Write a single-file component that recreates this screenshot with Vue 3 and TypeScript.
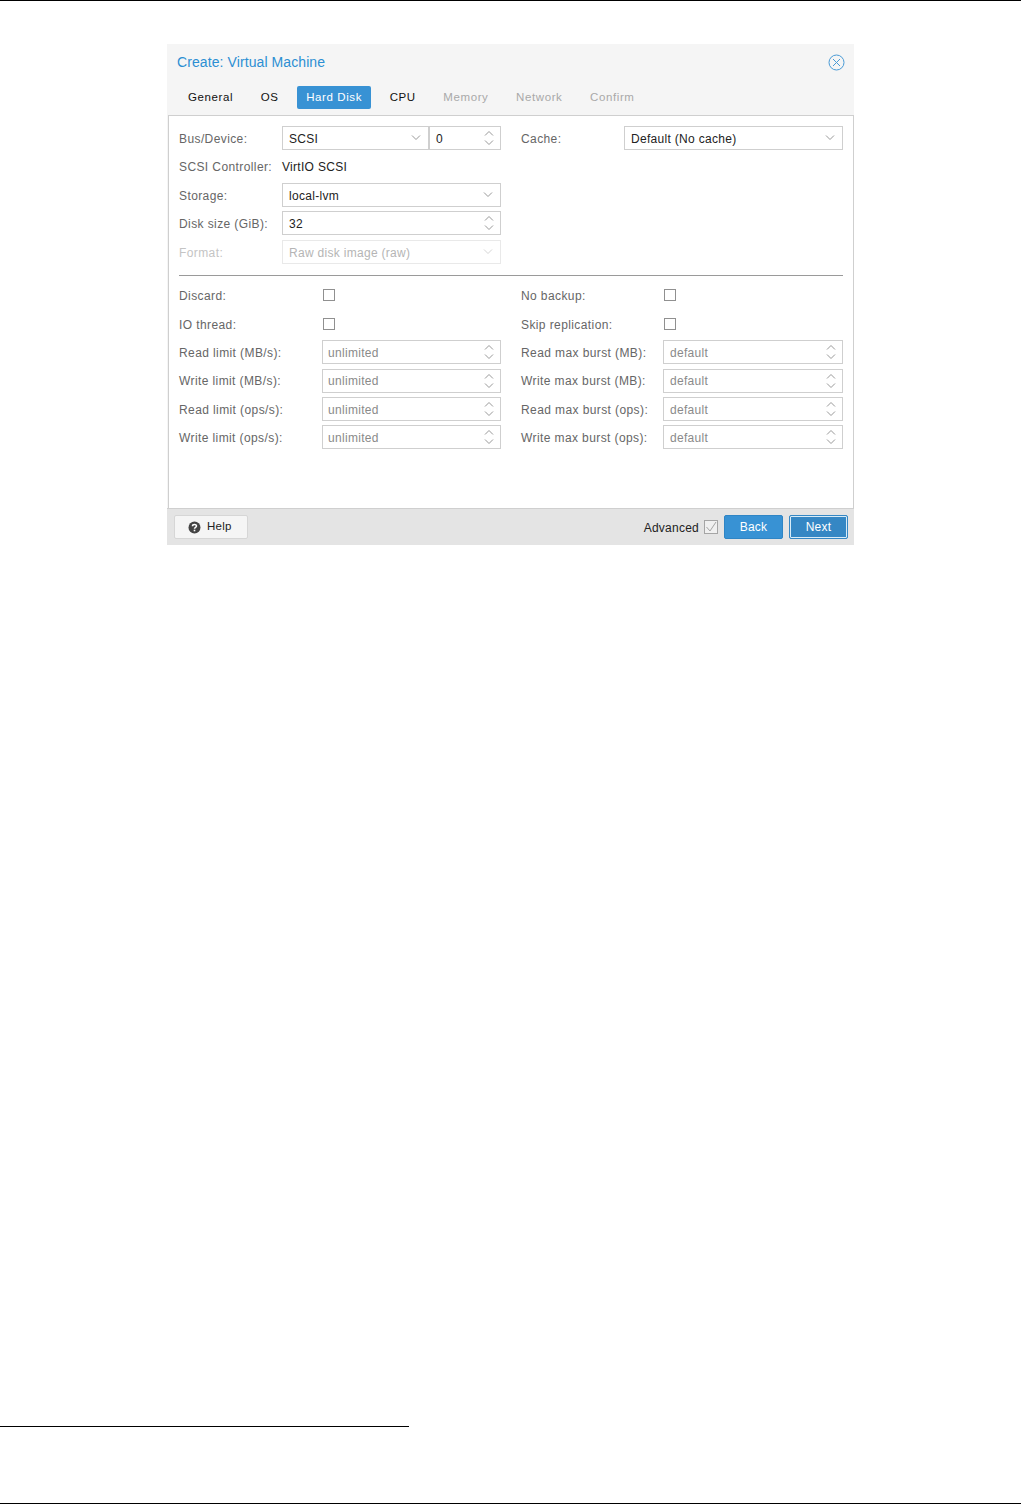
<script setup lang="ts">
const tabs = [
  { name: 'General', state: 'normal' },
  { name: 'OS', state: 'normal' },
  { name: 'Hard Disk', state: 'active' },
  { name: 'CPU', state: 'normal' },
  { name: 'Memory', state: 'disabled' },
  { name: 'Network', state: 'disabled' },
  { name: 'Confirm', state: 'disabled' },
]
const checks = [
  ['Discard:', 'No backup:'],
  ['IO thread:', 'Skip replication:'],
]
const limits = [
  ['Read limit (MB/s):', 'Read max burst (MB):'],
  ['Write limit (MB/s):', 'Write max burst (MB):'],
  ['Read limit (ops/s):', 'Read max burst (ops):'],
  ['Write limit (ops/s):', 'Write max burst (ops):'],
]
</script>

<template>
  <div class="page">
    <svg class="defs" width="0" height="0" aria-hidden="true">
      <symbol id="spin" viewBox="0 0 12 16">
        <path d="M2 5.500 6 1.500 10 5.500M2 10.500 6 14.500 10 10.500" fill="none" stroke="#999" stroke-width="1" />
      </symbol>
      <symbol id="down" viewBox="0 0 12 8">
        <path d="M2 1.500 6 5.500 10 1.500" fill="none" stroke="#999" stroke-width="1" />
      </symbol>
    </svg>

    <section class="dialog">
      <header class="head">
        <div class="title-row">
          <h1 class="title">Create: Virtual Machine</h1>
          <svg class="close" width="17" height="17" viewBox="0 0 17 17">
            <circle cx="8.500" cy="8.500" r="7.500" fill="none" stroke="#4a9bd6" stroke-width="1" />
            <path d="M5 5 12 12M12 5 5 12" stroke="#4a9bd6" stroke-width="1" />
          </svg>
        </div>
        <nav class="tabs">
          <span v-for="t in tabs" :key="t.name" class="tab" :class="t.state">{{ t.name }}</span>
        </nav>
      </header>

      <main class="body">
        <div class="columns top">
          <div class="col">
            <div class="row">
              <label class="lab">Bus/Device:</label>
              <div class="pair">
                <div class="box bus"><span>SCSI</span><svg class="dn"><use href="#down" /></svg></div>
                <div class="box dev"><span>0</span><svg class="sp"><use href="#spin" /></svg></div>
              </div>
            </div>
            <div class="row">
              <label class="lab">SCSI Controller:</label>
              <span class="static">VirtIO SCSI</span>
            </div>
            <div class="row">
              <label class="lab">Storage:</label>
              <div class="box"><span>local-lvm</span><svg class="dn"><use href="#down" /></svg></div>
            </div>
            <div class="row">
              <label class="lab">Disk size (GiB):</label>
              <div class="box"><span>32</span><svg class="sp"><use href="#spin" /></svg></div>
            </div>
            <div class="row off">
              <label class="lab">Format:</label>
              <div class="box"><span>Raw disk image (raw)</span><svg class="dn"><use href="#down" /></svg></div>
            </div>
          </div>
          <div class="col">
            <div class="row">
              <label class="lab">Cache:</label>
              <div class="box"><span>Default (No cache)</span><svg class="dn"><use href="#down" /></svg></div>
            </div>
          </div>
        </div>

        <hr class="rule" />

        <div class="columns adv">
          <div class="col">
            <div v-for="c in checks" :key="c[0]" class="row wide">
              <label class="lab">{{ c[0] }}</label>
              <i class="check"></i>
            </div>
            <div v-for="l in limits" :key="l[0]" class="row wide">
              <label class="lab">{{ l[0] }}</label>
              <div class="box hint"><span>unlimited</span><svg class="sp"><use href="#spin" /></svg></div>
            </div>
          </div>
          <div class="col right">
            <div v-for="c in checks" :key="c[1]" class="row wide">
              <label class="lab">{{ c[1] }}</label>
              <i class="check"></i>
            </div>
            <div v-for="l in limits" :key="l[1]" class="row wide">
              <label class="lab">{{ l[1] }}</label>
              <div class="box hint"><span>default</span><svg class="sp"><use href="#spin" /></svg></div>
            </div>
          </div>
        </div>
      </main>

      <footer class="foot">
        <button class="btn help">
          <svg width="13" height="13" viewBox="0 0 13 13">
            <circle cx="6.500" cy="6.500" r="6" fill="#444" />
            <path d="M4.500 5.200C4.500 3 8.500 3 8.500 5.100 8.500 6.400 6.500 6.300 6.500 7.700" fill="none" stroke="#fff" stroke-width="1.500" />
            <rect x="5.700" y="8.700" width="1.600" height="1.600" fill="#fff" />
          </svg>
          <span class="help-text">Help</span>
        </button>
        <span class="spacer"></span>
        <span class="adv-label">Advanced</span>
        <svg class="adv-check" width="14" height="14" viewBox="0 0 14 14">
          <rect x="0.500" y="0.500" width="13" height="13" fill="#f0f0f0" stroke="#a5a5a5" />
          <path d="M2.500 7 6 11 12 2" fill="none" stroke="#a5a5a5" stroke-width="1" />
        </svg>
        <button class="btn primary">Back</button>
        <button class="btn primary focus">Next</button>
      </footer>
    </section>

    <div class="foot-rule"></div>
  </div>
</template>

<style scoped>
.page {
  position: relative;
  box-sizing: border-box;
  width: 1021px;
  height: 1504px;
  border-top: 1px solid #000;
  border-bottom: 1px solid #000;
  padding-top: 43px;
  background: #fff;
  font-family: "Liberation Sans", Arial, sans-serif;
  font-size: 12px;
  letter-spacing: 0.4px;
  display: flex;
  flex-direction: column;
}
.defs { position: absolute; }
.dialog {
  box-sizing: border-box;
  width: 687px;
  height: 501px;
  margin-left: 167px;
  display: flex;
  flex-direction: column;
  background: #f5f5f5;
}
.head { height: 71px; box-sizing: border-box; padding: 0 9px 0 10px; }
.title-row { display: flex; align-items: center; justify-content: space-between; height: 36px; }
.title {
  margin: 0;
  font-size: 14px;
  font-weight: 400;
  letter-spacing: 0.090px;
  color: #2c8fd3;
}
.tabs { display: flex; gap: 9.600px; margin: 6px 0 0 2px; }
.tab {
  box-sizing: border-box;
  height: 23px;
  line-height: 23px;
  padding: 0 9px;
  font-size: 11.500px;
  letter-spacing: 0.600px;
  color: #111;
  border-radius: 2px;
}
.tab.active { background: #3892d4; color: #fff; }
.tab.disabled { color: #a9a9a9; }
.body {
  flex: 1;
  margin: 0 0 0 1px;
  width: 686px;
  box-sizing: border-box;
  border: 1px solid #cfcfcf;
  border-bottom: 0;
  background: #fff;
  padding: 10.200px 10px 0;
}
.columns { display: grid; grid-template-columns: 322px 322px; column-gap: 20px; }
.col { display: flex; flex-direction: column; gap: 4.400px; }
.row { display: flex; align-items: center; height: 24px; }
.lab { width: 103px; flex: none; color: #666; padding-top: 1.500px; }
.row.wide .lab { width: 143px; }
.right .row.wide .lab { width: 142px; }
.static { color: #222; letter-spacing: 0.300px; padding-top: 1.500px; }
.box {
  position: relative;
  flex: 1;
  box-sizing: border-box;
  height: 100%;
  min-width: 0;
  display: flex;
  align-items: center;
  padding-left: 6px;
  border: 1px solid #cfcfcf;
  color: #222;
  letter-spacing: 0.300px;
  background: #fff;
}
.box > span { flex: 1; padding-top: 1.500px; }
.pair { flex: 1; display: flex; height: 100%; }
.bus { flex: none; width: 147px; }
.dev { flex: 1; }
.hint { padding-left: 5px; color: #8a8a8a; }
.right .hint { padding-left: 6px; }
.dn { flex: none; width: 12px; height: 8px; margin-right: 6px; }
.sp { flex: none; width: 12px; height: 16px; margin-right: 5px; }
.off .lab { color: #c4c4c4; }
.off .box { border-color: #e9e9e9; color: #b5b5b5; }
.off .dn { opacity: 0.4; }
.rule { margin: 11px 0 7.700px; height: 1px; border: 0; background: #9a9a9a; }
.check {
  display: block;
  box-sizing: border-box;
  width: 12px;
  height: 12px;
  margin-left: 1px;
  border: 1px solid #909090;
  background: #fff;
}
.foot {
  box-sizing: border-box;
  height: 37px;
  display: flex;
  align-items: center;
  padding: 0 6px 0 7px;
  background: #e4e4e4;
  border-top: 1px solid #cfcfcf;
}
.spacer { flex: 1; }
.btn {
  box-sizing: border-box;
  height: 24px;
  padding: 0;
  border-radius: 2px;
  font: inherit;
  letter-spacing: 0.250px;
}
.help {
  width: 74px;
  display: flex;
  align-items: center;
  gap: 6px;
  padding-left: 13px;
  font-size: 11.500px;
  background: #f5f5f5;
  border: 1px solid #d6d6d6;
  color: #222;
}
.help-text { margin-bottom: 2px; }
.adv-label { color: #222; margin-right: 5px; padding-top: 1px; letter-spacing: 0.250px; }
.adv-check { margin-right: 6px; }
.primary { width: 59px; background: #3892d4; border: 1px solid #2f85c5; color: #fff; }
.focus {
  margin-left: 6px;
  background: #3587c4;
  border: 1px solid #3587c4;
  box-shadow: inset 0 0 0 1px #d8ecf8;
}
.foot-rule {
  position: absolute;
  left: 0;
  top: 1425px;
  width: 409px;
  height: 1px;
  background: #000;
}
</style>

<style>
html, body { margin: 0; background: #fff; }
</style>
